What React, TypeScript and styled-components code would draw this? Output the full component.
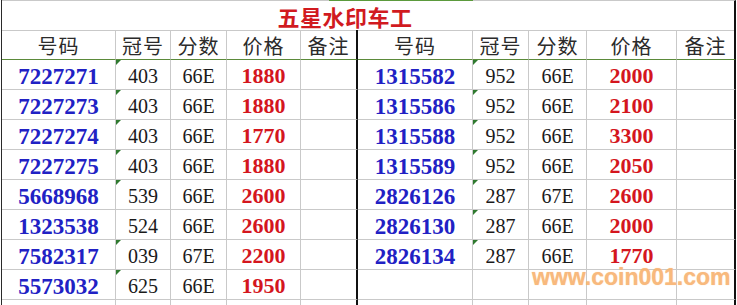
import React from "react";
import styled, { createGlobalStyle } from "styled-components";

const GlobalStyle = createGlobalStyle`
    html, body {
        margin: 0;
        padding: 0;
        background: #ffffff;
        overflow: hidden;
    }
`;

const cjk = `"Noto Sans CJK SC", sans-serif`;
const serif = `"Liberation Serif", "Noto Sans CJK SC", serif`;
const gridColor = "#c9c9c9";

const Sheet = styled.div`
    position: relative;
    margin-left: 1px;
    width: 735px;
    display: grid;
    grid-template-columns: 114px 55px 56px 74px 57px 115px 56px 58px 90px 59px;
    grid-auto-rows: 30px;
    border-left: 1px solid #2a2a2a;
    box-sizing: border-box;
`;

const TitleCell = styled.div`
    grid-column: 1 / -1;
    height: 31px;
    box-sizing: border-box;
    position: relative;
    border-top: 1px solid ${gridColor};
    border-bottom: 1px solid ${gridColor};
    border-right: 2px solid #111;
    display: flex;
    align-items: center;
    justify-content: center;
    padding: 1px 46px 0 0;
    font-family: ${cjk};
    font-weight: 700;
    font-size: 22px;
    letter-spacing: 0.5px;
    color: #d11a1f;

    &::after {
        content: "";
        position: absolute;
        top: -1px;
        left: 327px;
        width: 144px;
        height: 1px;
        background: #5b9a3c;
    }
`;

const Cell = styled.div<{ $edge?: boolean; $header?: boolean; $flag?: boolean }>`
    position: relative;
    box-sizing: border-box;
    height: 30px;
    display: flex;
    align-items: center;
    justify-content: center;
    padding-top: ${(p) => (p.$header ? "1px" : "3px")};
    border-right: ${(p) => (p.$edge ? "2px solid #111" : `1px solid ${gridColor}`)};
    border-bottom: 1px solid ${(p) => (p.$header ? "#5b8a3a" : gridColor)};
    white-space: nowrap;

    &::before {
        content: "";
        display: ${(p) => (p.$flag ? "block" : "none")};
        position: absolute;
        top: 0;
        left: 0;
        width: 0;
        height: 0;
        border-top: 5px solid #2f7a2f;
        border-right: 5px solid transparent;
    }
`;

const HeadText = styled.span`
    font-family: ${cjk};
    font-size: 20px;
    font-weight: 400;
    color: #2b2b2b;
    letter-spacing: 1px;
`;

const Serial = styled.span`
    font-family: ${serif};
    font-size: 23px;
    line-height: 1;
    font-weight: 700;
    color: #2121c4;
`;

const Plain = styled.span`
    font-family: ${serif};
    font-size: 20px;
    line-height: 1;
    color: #1a1a1a;
`;

const Price = styled.span`
    font-family: ${serif};
    font-size: 22px;
    line-height: 1;
    font-weight: 700;
    color: #d4161e;
`;

const Watermark = styled.div`
    position: absolute;
    left: 530px;
    top: 266px;
    line-height: 1;
    font-family: "Liberation Sans", Arial, sans-serif;
    font-weight: 700;
    font-size: 23px;
    color: #f8b26f;
    opacity: 0.9;
    text-shadow: 0 0 1px #fbc894;
    pointer-events: none;
`;

type Row = [string, string, string, string, boolean] | null;

const leftRows: Row[] = [
    ["7227271", "403", "66E", "1880", true],
    ["7227273", "403", "66E", "1880", true],
    ["7227274", "403", "66E", "1770", true],
    ["7227275", "403", "66E", "1880", true],
    ["5668968", "539", "66E", "2600", true],
    ["1323538", "524", "66E", "2600", false],
    ["7582317", "039", "67E", "2200", true],
    ["5573032", "625", "66E", "1950", true],
    null,
];

const rightRows: Row[] = [
    ["1315582", "952", "66E", "2000", true],
    ["1315586", "952", "66E", "2100", true],
    ["1315588", "952", "66E", "3300", true],
    ["1315589", "952", "66E", "2050", true],
    ["2826126", "287", "67E", "2600", true],
    ["2826130", "287", "66E", "2000", true],
    ["2826134", "287", "66E", "1770", true],
    null,
    null,
];

const headers = ["号码", "冠号", "分数", "价格", "备注"];

function Half({ row }: { row: Row }) {
    return (
        <>
            <Cell>{row && <Serial>{row[0]}</Serial>}</Cell>
            <Cell $flag={!!row && row[4]}>{row && <Plain>{row[1]}</Plain>}</Cell>
            <Cell>{row && <Plain>{row[2]}</Plain>}</Cell>
            <Cell>{row && <Price>{row[3]}</Price>}</Cell>
            <Cell $edge />
        </>
    );
}

export default function App() {
    return (
        <>
            <GlobalStyle />
            <Sheet>
                <TitleCell>五星水印车工</TitleCell>
                {[0, 1].map((half) =>
                    headers.map((h, i) => (
                        <Cell key={`${half}-${h}`} $header $edge={i === 4}>
                            <HeadText>{h}</HeadText>
                        </Cell>
                    )),
                )}
                {leftRows.map((row, i) => (
                    <React.Fragment key={i}>
                        <Half row={row} />
                        <Half row={rightRows[i]} />
                    </React.Fragment>
                ))}
                <Watermark>www.coin001.com</Watermark>
            </Sheet>
        </>
    );
}
